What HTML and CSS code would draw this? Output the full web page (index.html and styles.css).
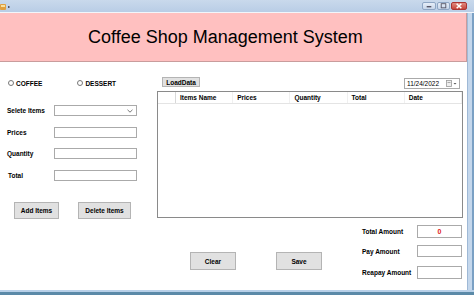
FILE: index.html
```html
<!DOCTYPE html>
<html>
<head>
<meta charset="utf-8">
<title>Coffee Shop</title>
<link rel="stylesheet" href="styles.css">
</head>
<body>
<div class="window">
  <div class="titlebar">
    <svg class="appicon" width="10" height="9" viewBox="0 0 10 9"><rect x="0" y="2" width="6" height="6" rx="1" fill="#e0a040"/><rect x="1" y="3" width="4" height="2" fill="#f8e0a0"/><rect x="8" y="4" width="1.5" height="2" fill="#556"/></svg>
    <div class="controls">
      <span class="ctl min"><svg width="13" height="8" viewBox="0 0 13 8"><rect x="4" y="4" width="5" height="1.5" fill="#556"/></svg></span>
      <span class="ctl max"><svg width="12" height="8" viewBox="0 0 12 8"><rect x="3.5" y="1.5" width="5" height="4.5" fill="none" stroke="#556" stroke-width="1"/></svg></span>
      <span class="ctl close"><svg width="15" height="8" viewBox="0 0 15 8"><path d="M5 1.5 L10 6.5 M10 1.5 L5 6.5" stroke="#fff" stroke-width="1.6"/></svg></span>
    </div>
  </div>
  <div class="frame">
    <div class="client">
      <header class="banner"><h1>Coffee Shop Management System</h1></header>
      <div class="body">
        <section class="left">
          <div class="radios">
            <label class="radio"><span class="dot"></span>COFFEE</label>
            <label class="radio second"><span class="dot"></span>DESSERT</label>
          </div>
          <div class="form">
            <div class="row"><span class="lbl">Selete Items</span><span class="box select"><svg width="6" height="4" viewBox="0 0 6 4"><path d="M0.5 0.8 L3 3.2 L5.5 0.8" fill="none" stroke="#555" stroke-width="0.8"/></svg></span></div>
            <div class="row"><span class="lbl">Prices</span><span class="box"></span></div>
            <div class="row"><span class="lbl">Quantity</span><span class="box"></span></div>
            <div class="row"><span class="lbl total">Total</span><span class="box"></span></div>
          </div>
          <div class="actions">
            <button class="btn add">Add Items</button>
            <button class="btn del">Delete Items</button>
          </div>
        </section>
        <section class="right">
          <div class="toprow">
            <button class="btn load">LoadData</button>
            <div class="date"><span>11/24/2022</span><svg width="11" height="7" viewBox="0 0 11 7"><rect x="0.5" y="0.5" width="5" height="6" fill="#eee" stroke="#999" stroke-width="0.8"/><rect x="1.5" y="2" width="3" height="0.8" fill="#999"/><path d="M7.5 3 L9 4.5 L10.5 3 Z" fill="#555"/></svg></div>
          </div>
          <div class="grid">
            <div class="ghead">
              <span class="rh"></span>
              <span class="col">Items Name</span>
              <span class="col">Prices</span>
              <span class="col">Quantity</span>
              <span class="col">Total</span>
              <span class="col">Date</span>
            </div>
          </div>
          <div class="bottom">
            <div class="btns">
              <button class="btn big">Clear</button>
              <button class="btn big">Save</button>
            </div>
            <div class="amounts">
              <div class="arow r1"><span class="lbl">Total Amount</span><span class="box abox zero">0</span></div>
              <div class="arow r2"><span class="lbl">Pay Amount</span><span class="box abox"></span></div>
              <div class="arow r3"><span class="lbl">Reapay Amount</span><span class="box abox"></span></div>
            </div>
          </div>
        </section>
      </div>
    </div>
    <div class="edge-right"></div>
  </div>
  <div class="edge-bottom"></div>
</div>
</body>
</html>
```
FILE: styles.css
```css
* { box-sizing: border-box; margin: 0; padding: 0; }
html, body { width: 474px; height: 295px; overflow: hidden; background: #fff; }
body { font-family: "Liberation Sans", Arial, sans-serif; color: #000; }

.window { width: 474px; height: 295px; display: flex; flex-direction: column; }

.titlebar {
  height: 13px; flex: none;
  background: linear-gradient(#c9d9ec, #b9cde6);
  display: flex; align-items: center; justify-content: space-between;
  border-bottom: 1px solid #f2f6fb;
}
.appicon { margin-left: 0; }
.controls { display: flex; gap: 1px; margin-right: 7px; align-items: center; }
.ctl { display: flex; align-items: center; justify-content: center; height: 8px; border: 1px solid #8ea6c4; border-radius: 2px; background: linear-gradient(#e6eef8, #c7d6ea); }
.ctl.min { width: 14px; }
.ctl.max { width: 13px; }
.ctl.close { width: 16px; background: linear-gradient(#e08a80, #c7443a); border-color: #a33; }

.frame { flex: 1; display: flex; min-height: 0; }
.client { width: 467px; display: flex; flex-direction: column; }
.edge-right { flex: 1; background: #c4d7ec; border-left: 1px solid #9fb9d6; border-right: 2px solid #7aa0c4; }
.edge-bottom { height: 5px; flex: none; background: #5b8aa8; border-top: 2px solid #b8d0e8; }

.banner {
  height: 49px; flex: none;
  background: #ffc0c0;
  border-bottom: 1px solid #c99c9c;
  border-right: 1px solid #c99c9c;
  display: flex; align-items: center;
}
.banner h1 { font-weight: normal; font-size: 18px; margin-left: 88px; margin-top: 1px; letter-spacing: 0; }

.body { flex: 1; display: flex; }

.lbl { font-size: 6.5px; font-weight: bold; white-space: nowrap; }
.box { display: block; background: #fff; border: 1px solid #aaa; height: 11px; }

.left { width: 157px; flex: none; display: flex; flex-direction: column; }
.radios { display: flex; margin-top: 16px; height: 10px; align-items: center; }
.radio { display: flex; align-items: center; font-size: 6.5px; font-weight: bold; margin-left: 8px; }
.radio.second { margin-left: 35px; }
.dot { width: 6px; height: 6px; border: 1px solid #777; border-radius: 50%; margin-right: 2px; background: #fff; }

.form { display: grid; row-gap: 10.6px; margin-top: 17px; }
.row { display: grid; grid-template-columns: 47px 83px; padding-left: 7px; align-items: center; height: 11px; }
.row .total { padding-left: 1px; }
.select { display: flex; align-items: center; justify-content: flex-end; padding-right: 3px; }

.btn {
  font-family: "Liberation Sans", Arial, sans-serif;
  font-size: 6.5px; font-weight: bold; color: #000;
  background: #e1e1e1; border: 1px solid #b4b4b4;
  display: flex; align-items: center; justify-content: center;
}
.actions { display: flex; margin-top: 21px; }
.add { width: 45px; height: 17px; margin-left: 14px; }
.del { width: 53px; height: 17px; margin-left: 19px; }

.right { flex: 1; display: flex; flex-direction: column; }
.toprow { display: flex; align-items: flex-start; height: 14px; margin-top: 15px; }
.load { width: 38px; height: 10px; margin-left: 5px; font-weight: bold; }
.date {
  margin-left: 204px; margin-top: 1px; width: 56px; height: 11px;
  border: 1px solid #aaa; background: #fff;
  display: flex; align-items: center; justify-content: space-between;
  font-size: 6.5px; padding: 0 2px 0 2px;
}

.grid { width: 306px; height: 127px; border: 1px solid #8a8a8a; background: #fff; }
.ghead { display: flex; height: 12px; border-bottom: 1px solid #e4e4e4; align-items: center; }
.rh { width: 18px; height: 100%; border-right: 1px solid #d8d8d8; }
.col { width: 57.2px; font-size: 6.5px; font-weight: bold; padding-left: 4px; height: 100%; display: flex; align-items: center; border-right: 1px solid #f0f0f0; }

.bottom { display: flex; flex: 1; }
.btns { display: flex; gap: 40px; margin-left: 33px; margin-top: 34px; align-self: flex-start; }
.big { width: 46px; height: 18px; }
.amounts { margin-left: 40px; display: flex; flex-direction: column; margin-top: 7px; }
.arow { display: grid; grid-template-columns: 55px 45px; align-items: center; }
.abox { height: 13px; }
.r2 { margin-top: 7px; }
.r2 .abox { height: 12px; }
.r3 { margin-top: 9px; }
.zero { color: #e02020; font-weight: bold; font-size: 7px; display: flex; align-items: center; justify-content: center; }
```
